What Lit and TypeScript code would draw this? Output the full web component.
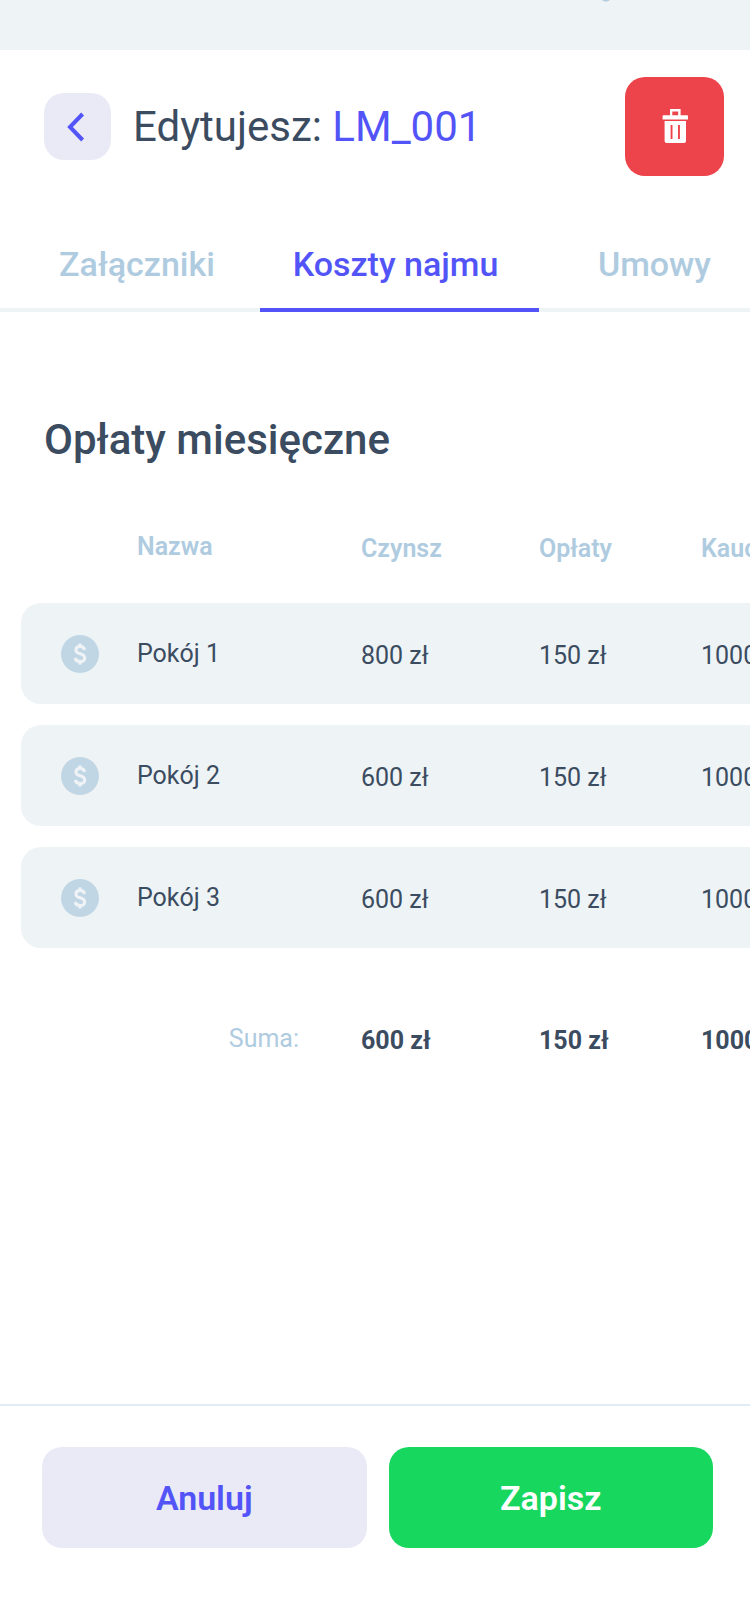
import { LitElement, html, css, svg } from "lit";
import { customElement, property, state } from "lit/decorators.js";
import { classMap } from "lit/directives/class-map.js";

interface Room {
  name: string;
  rent: string;
  fees: string;
  deposit: string;
}

const coin = svg`
  <circle cx="19" cy="19" r="19" fill="#c1d6e5" />
  <path
    d="M23.7 14.8C23.1 12.6 21.4 11.6 19.1 11.6C16.5 11.6 14.9 12.8 14.9 14.9C14.9 17 16.3 18 19.2 18.8C22.2 19.6 23.7 20.8 23.7 23C23.7 25.1 22 26.5 19.2 26.5C16.4 26.5 14.7 25.1 14.1 23"
    fill="none" stroke="#eff3f6" stroke-width="3" />
  <path d="M19 8.4V12M19 26V29.6" fill="none" stroke="#eff3f6" stroke-width="3.2" />
`;

@customElement("costs-table")
export class CostsTable extends LitElement {
  @property({ attribute: false }) rooms: Room[] = [];

  static styles = css`
    :host {
      display: block;
      overflow: hidden;
      padding-left: 21px;
    }
    .table {
      width: 100%;
      min-width: 860px;
      table-layout: fixed;
      border-collapse: separate;
      border-spacing: 0 21px;
      font-size: 25px;
      line-height: 29px;
    }
    .col-icon { width: 116px; }
    .col-name { width: 224px; }
    .col-rent { width: 178px; }
    .col-fees { width: 162px; }
    th, td {
      box-sizing: border-box;
      padding: 0;
      text-align: left;
      font-weight: 400;
      vertical-align: middle;
    }
    .head th {
      height: 54px;
      padding-bottom: 17px;
      color: #afcbdf;
      font-weight: 600;
    }
    .room th, .room td {
      height: 101px;
      background: #eef3f6;
    }
    .room .icon {
      padding-left: 40px;
      border-radius: 20px 0 0 20px;
    }
    .room .last { border-radius: 0 20px 20px 0; }
    .value { padding-top: 4px; }
    .coin { display: block; }
    .total th, .total td { height: 101px; padding-top: 38px; }
    .total td { padding-top: 42px; font-weight: 700; }
    .total th {
      padding-right: 62px;
      text-align: right;
      color: #afcbdf;
    }
  `;

  render() {
    return html`
      <table class="table">
        <colgroup>
          <col class="col-icon" /><col class="col-name" /><col class="col-rent" /><col class="col-fees" /><col />
        </colgroup>
        <thead>
          <tr class="head">
            <th></th>
            <th scope="col">Nazwa</th>
            <th scope="col" class="value">Czynsz</th>
            <th scope="col" class="value">Opłaty</th>
            <th scope="col" class="value">Kaucja</th>
          </tr>
        </thead>
        <tbody>
          ${this.rooms.map(
            (r) => html`
              <tr class="room">
                <td class="icon">
                  <svg class="coin" width="38" height="38" viewBox="0 0 38 38" aria-hidden="true">${coin}</svg>
                </td>
                <th scope="row">${r.name}</th>
                <td class="value">${r.rent}</td>
                <td class="value">${r.fees}</td>
                <td class="value last">${r.deposit}</td>
              </tr>
            `
          )}
        </tbody>
        <tfoot>
          <tr class="total">
            <th scope="row" colspan="2">Suma:</th>
            <td>600 zł</td>
            <td>150 zł</td>
            <td>1000 zł</td>
          </tr>
        </tfoot>
      </table>
    `;
  }
}

@customElement("app-root")
export class AppRoot extends LitElement {
  @state() private active = 1;

  private tabs = ["Załączniki", "Koszty najmu", "Umowy"];

  private rooms: Room[] = [
    { name: "Pokój 1", rent: "800 zł", fees: "150 zł", deposit: "1000 zł" },
    { name: "Pokój 2", rent: "600 zł", fees: "150 zł", deposit: "1000 zł" },
    { name: "Pokój 3", rent: "600 zł", fees: "150 zł", deposit: "1000 zł" },
  ];

  static styles = css`
    :host {
      display: flex;
      flex-direction: column;
      min-height: 100vh;
      overflow: hidden;
      background: #fff;
      color: #3b4c61;
      font-family: Roboto, "Noto Sans", sans-serif;
    }
    button {
      border: 0;
      padding: 0;
      font: inherit;
      cursor: pointer;
    }
    .backdrop {
      display: flex;
      justify-content: flex-end;
      height: 50px;
      padding-right: 140px;
      background: #eef3f6;
    }
    .header {
      display: flex;
      align-items: center;
      gap: 22px;
      padding: 27px 26px 0 44px;
    }
    .icon-button {
      display: flex;
      flex: none;
      align-items: center;
      justify-content: center;
      border-radius: 20px;
    }
    .back {
      width: 67px;
      height: 67px;
      background: #eaeaf6;
    }
    .delete {
      width: 99px;
      height: 99px;
      margin-left: auto;
      background: #ed434a;
    }
    .title {
      margin: 0;
      font-size: 42px;
      line-height: 50px;
      font-weight: 400;
    }
    .code { color: #5354f7; }
    .tabs {
      display: grid;
      grid-template-columns: 260fr 279fr 211fr;
      margin-top: 52px;
    }
    .tab {
      padding: 16px 0 24px;
      border-bottom: 4px solid #eef3f6;
      background: none;
      color: #afcbdf;
      font-size: 34px;
      line-height: 40px;
      font-weight: 500;
    }
    .tab:first-child { padding-left: 14px; }
    .tab:nth-child(2) { padding-right: 8px; }
    .tab:last-child { padding-left: 20px; }
    .tab.active {
      border-color: #5354f7;
      color: #5354f7;
    }
    .heading {
      margin: 103px 44px 42px;
      font-size: 42px;
      line-height: 50px;
      font-weight: 500;
    }
    .footer {
      display: grid;
      grid-template-columns: 1fr 1fr;
      gap: 22px;
      margin-top: auto;
      padding: 41px 37px 76px 42px;
      border-top: 2px solid #e1ecf4;
    }
    .action {
      height: 101px;
      border-radius: 20px;
      font-size: 34px;
      line-height: 40px;
      font-weight: 600;
    }
    .cancel {
      background: #eaeaf6;
      color: #5354f7;
    }
    .save {
      background: #18d75f;
      color: #fff;
    }
  `;

  render() {
    return html`
      <div class="backdrop">
        <svg width="8" height="2" viewBox="0 0 8 2" aria-hidden="true">
          <path d="M0 0H8Q6 1.6 4 1.6Q2 1.6 0 0Z" fill="#afcbdf" />
        </svg>
      </div>
      <header class="header">
        <button class="icon-button back" aria-label="Wstecz">
          <svg width="22" height="30" viewBox="0 0 22 30" aria-hidden="true">
            <path d="M15.6 2L3 15L15.6 28" fill="none" stroke="#5354f7" stroke-width="4" />
          </svg>
        </button>
        <h1 class="title">Edytujesz: <span class="code">LM_001</span></h1>
        <button class="icon-button delete" aria-label="Usuń">
          <svg width="26" height="36" viewBox="0 0 26 36" aria-hidden="true">
            <path
              fill="#fff"
              fill-rule="evenodd"
              d="M8 6.3V0H18.6V6.3H25Q26 6.3 26 7.3V10.6H.6V7.3Q.6 6.3 1.6 6.3ZM10.3 2.4V6.3H16.2V2.4ZM2.6 12H24V32Q24 34 22 34H4.6Q2.6 34 2.6 32ZM8.6 16V30H10.5V16ZM16 16V30H17.9V16Z"
            />
          </svg>
        </button>
      </header>
      <div class="tabs" role="tablist">
        ${this.tabs.map(
          (label, i) => html`
            <button
              role="tab"
              aria-selected=${i === this.active ? "true" : "false"}
              class=${classMap({ tab: true, active: i === this.active })}
              @click=${() => (this.active = i)}
            >${label}</button>
          `
        )}
      </div>
      <h2 class="heading">Opłaty miesięczne</h2>
      <costs-table .rooms=${this.rooms}></costs-table>
      <footer class="footer">
        <button class="action cancel">Anuluj</button>
        <button class="action save">Zapisz</button>
      </footer>
    `;
  }
}
